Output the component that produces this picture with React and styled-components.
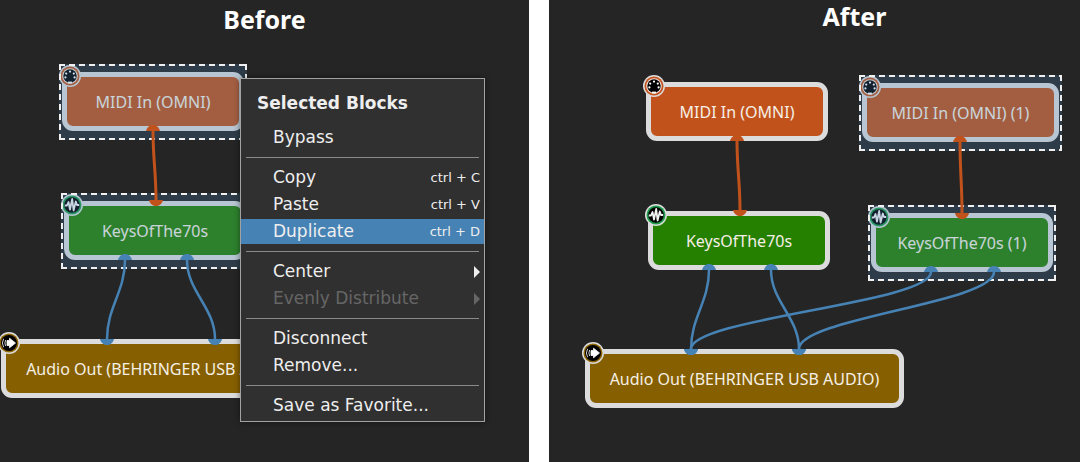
import React from "react";
import styled, { createGlobalStyle } from "styled-components";

const GlobalStyle = createGlobalStyle`
  *, *::before, *::after { box-sizing: border-box; }
  body { margin: 0; background: #ffffff; }
`;

const Comparison = styled.main`
  display: grid;
  grid-template-columns: 529fr 531fr;
  gap: 20px;
  min-height: 100vh;
`;

const Panel = styled.section`
  position: relative;
  overflow: hidden;
  min-height: 440px;
  padding-top: ${(p) => p.$top}px;
  background: #252525;
`;

const PanelTitle = styled.h2`
  margin: 0;
  padding-left: ${(p) => p.$indent}px;
  color: #ffffff;
  font: bold 25px/32px "Noto Sans", sans-serif;
  text-align: center;
`;

const Canvas = styled.div`
  position: absolute;
  inset: 0;
`;

const Node = styled.div`
  position: absolute;
  left: ${(p) => p.$x}px;
  top: ${(p) => p.$y}px;
  width: ${(p) => p.$w}px;
  height: 59px;
  display: flex;
  align-items: center;
  justify-content: center;
  border: 5px solid #dcdcdc;
  border-radius: 11px;
  background: ${(p) => p.$fill};
  color: #f5efe6;
  font: 16px/20px "Noto Sans", sans-serif;
  white-space: nowrap;
`;

const Badge = styled.svg`
  position: absolute;
  left: -8px;
  top: -12px;
  width: 22px;
  height: 22px;
`;

const Selection = styled.div`
  position: absolute;
  inset: -13px -8px -14px;
`;

const SelectionShape = styled.svg`
  display: block;
  width: 100%;
  height: 100%;
`;

const Wires = styled.svg`
  position: absolute;
  left: 0;
  top: 0;
  width: 531px;
  height: 462px;
`;

const Menu = styled.div`
  position: absolute;
  left: 240px;
  top: 78px;
  width: 245px;
  display: flex;
  flex-direction: column;
  gap: 2px;
  padding: 11px 0 3px;
  border: 1px solid #a2a2a2;
  background: #303030;
  box-shadow: 0 0 6px rgba(0, 0, 0, 0.45);
  color: #eeeeee;
  font-family: "DejaVu Sans", sans-serif;
`;

const MenuTitle = styled.h3`
  margin: 0 0 7px;
  padding-left: 16px;
  font-size: 17px;
  line-height: 26px;
`;

const MenuItem = styled.button`
  display: flex;
  align-items: center;
  justify-content: space-between;
  height: 25px;
  padding: 0 4px 0 32px;
  border: 0;
  background: ${(p) => (p.$active ? "#4682b4" : "transparent")};
  color: inherit;
  font: 17px/25px "DejaVu Sans", sans-serif;
  text-align: left;
  white-space: nowrap;
  &:disabled { color: #666666; }
`;

const Shortcut = styled.kbd`
  font: 13px/25px "DejaVu Sans", sans-serif;
`;

const Arrow = styled.svg`
  width: 6px;
  height: 12px;
  fill: currentColor;
`;

const Separator = styled.hr`
  width: 233px;
  height: 1px;
  margin: 5px auto;
  border: 0;
  background: #8a8a8a;
`;

const kinds = {
  midi: { fill: "#c2521c", ring: "#c2521c" },
  synth: { fill: "#258000", ring: "#1f9d4c" },
  audio: { fill: "#866000", ring: "#8f6608" },
};

const midiPins = [[6.4, 12.4], [7.2, 8.6], [11, 6.6], [14.8, 8.6], [15.6, 12.4]];

function BadgeIcon({ kind }) {
  return (
    <Badge viewBox="0 0 22 22" aria-hidden="true">
      <circle cx="11" cy="11" r="11" fill="#dcdcdc" />
      <circle cx="11" cy="11" r="9.5" fill={kinds[kind].ring} />
      {kind === "midi" && (
        <>
          <circle cx="11" cy="11" r="7.8" fill="#f2dfd6" />
          <circle cx="11" cy="11" r="6.7" fill="#000" />
          {midiPins.map(([cx, cy]) => (
            <circle key={cx} cx={cx} cy={cy} r="1.1" fill="#fff" />
          ))}
          <path d="M9 18.4V16.6h4v1.8z" fill="#fff" />
        </>
      )}
      {kind === "synth" && (
        <>
          <circle cx="11" cy="11" r="7.8" fill="#000" />
          <path d="M3.8 11.5H6L7.5 8L9 15.5L11.2 5L12.6 16.5L14.8 7.5L16 11H18.2" fill="none" stroke="#f2f2f2" strokeWidth="1.8" strokeLinejoin="round" />
        </>
      )}
      {kind === "audio" && (
        <>
          <circle cx="11" cy="11" r="8" fill="#000" />
          <path d="M9 8.5H11.5V6.2L17.5 11L11.5 15.8V13.5H9Z" fill="#fff" stroke="#fff" strokeWidth="0.8" />
          <path d="M7.6 8Q6.2 11 7.6 14M5.6 6.8Q3.2 11 5.6 15.2" fill="none" stroke="#d0d0d0" strokeWidth="1" />
        </>
      )}
    </Badge>
  );
}

function Block({ kind, x, y, w, selected, children }) {
  return (
    <Node $x={x} $y={y} $w={w} $fill={kinds[kind].fill}>
      {children}
      <BadgeIcon kind={kind} />
      {selected && (
        <Selection>
          <SelectionShape aria-hidden="true">
            <rect width="100%" height="100%" fill="#4682b4" fillOpacity="0.25" />
            <g stroke="#f0f0f0" strokeWidth="4" strokeDasharray="6 4">
              <line x1="0" y1="0" x2="100%" y2="0" />
              <line x1="0" y1="100%" x2="100%" y2="100%" />
              <line x1="0" y1="0" x2="0" y2="100%" />
              <line x1="100%" y1="0" x2="100%" y2="100%" />
            </g>
          </SelectionShape>
        </Selection>
      )}
    </Node>
  );
}

const wireColors = { midi: "#c2521c", audio: "#4682b4" };

function Wire({ type, from, to }) {
  const [x1, y1] = from;
  const [x2, y2] = to;
  const bend = (y2 - y1) * 0.4;
  const color = wireColors[type];
  return (
    <g fill={color}>
      <path
        d={`M${x1} ${y1 - 2}V${y1}C${x1} ${y1 + bend} ${x2} ${y2 - bend} ${x2} ${y2}V${y2 + 2}`}
        fill="none"
        stroke={color}
        strokeWidth={type === "midi" ? 3 : 2.5}
      />
      <path d={`M${x1 - 7} ${y1}C${x1 - 5} ${y1 - 8} ${x1 + 5} ${y1 - 8} ${x1 + 7} ${y1}Z`} />
      <path d={`M${x2 - 7} ${y2}C${x2 - 5} ${y2 + 8} ${x2 + 5} ${y2 + 8} ${x2 + 7} ${y2}Z`} />
    </g>
  );
}

function SubmenuArrow() {
  return (
    <Arrow viewBox="0 0 6 12" aria-hidden="true">
      <path d="M0 0L6 6L0 12Z" />
    </Arrow>
  );
}

function ContextMenu() {
  return (
    <Menu>
      <MenuTitle>Selected Blocks</MenuTitle>
      <MenuItem>Bypass</MenuItem>
      <Separator />
      <MenuItem>Copy <Shortcut>ctrl + C</Shortcut></MenuItem>
      <MenuItem>Paste <Shortcut>ctrl + V</Shortcut></MenuItem>
      <MenuItem $active>Duplicate <Shortcut>ctrl + D</Shortcut></MenuItem>
      <Separator />
      <MenuItem>Center <SubmenuArrow /></MenuItem>
      <MenuItem disabled>Evenly Distribute <SubmenuArrow /></MenuItem>
      <Separator />
      <MenuItem>Disconnect</MenuItem>
      <MenuItem>Remove...</MenuItem>
      <Separator />
      <MenuItem>Save as Favorite...</MenuItem>
    </Menu>
  );
}

export default function App() {
  return (
    <>
      <GlobalStyle />
      <Comparison>
        <Panel $top={3}>
          <PanelTitle $indent={0}>Before</PanelTitle>
          <Canvas>
            <Block kind="midi" x={62} y={72} w={182} selected>MIDI In (OMNI)</Block>
            <Block kind="synth" x={64} y={201} w={182} selected>KeysOfThe70s</Block>
            <Block kind="audio" x={1} y={339} w={320}>Audio Out (BEHRINGER USB AUDIO)</Block>
            <Wires aria-hidden="true">
              <Wire type="midi" from={[153, 131]} to={[156, 200]} />
              <Wire type="audio" from={[125, 260]} to={[107, 339]} />
              <Wire type="audio" from={[187, 260]} to={[215, 339]} />
            </Wires>
            <ContextMenu />
          </Canvas>
        </Panel>
        <Panel $top={0}>
          <PanelTitle $indent={80}>After</PanelTitle>
          <Canvas>
            <Block kind="midi" x={97} y={82} w={182}>MIDI In (OMNI)</Block>
            <Block kind="synth" x={99} y={211} w={182}>KeysOfThe70s</Block>
            <Block kind="midi" x={313} y={83} w={197} selected>MIDI In (OMNI) (1)</Block>
            <Block kind="synth" x={322} y={213} w={182} selected>KeysOfThe70s (1)</Block>
            <Block kind="audio" x={36} y={349} w={319}>Audio Out (BEHRINGER USB AUDIO)</Block>
            <Wires aria-hidden="true">
              <Wire type="midi" from={[188, 141]} to={[191, 210]} />
              <Wire type="midi" from={[411, 142]} to={[413, 213]} />
              <Wire type="audio" from={[160, 270]} to={[142, 349]} />
              <Wire type="audio" from={[222, 270]} to={[250, 349]} />
              <Wire type="audio" from={[382, 272]} to={[142, 349]} />
              <Wire type="audio" from={[445, 272]} to={[250, 349]} />
            </Wires>
          </Canvas>
        </Panel>
      </Comparison>
    </>
  );
}
